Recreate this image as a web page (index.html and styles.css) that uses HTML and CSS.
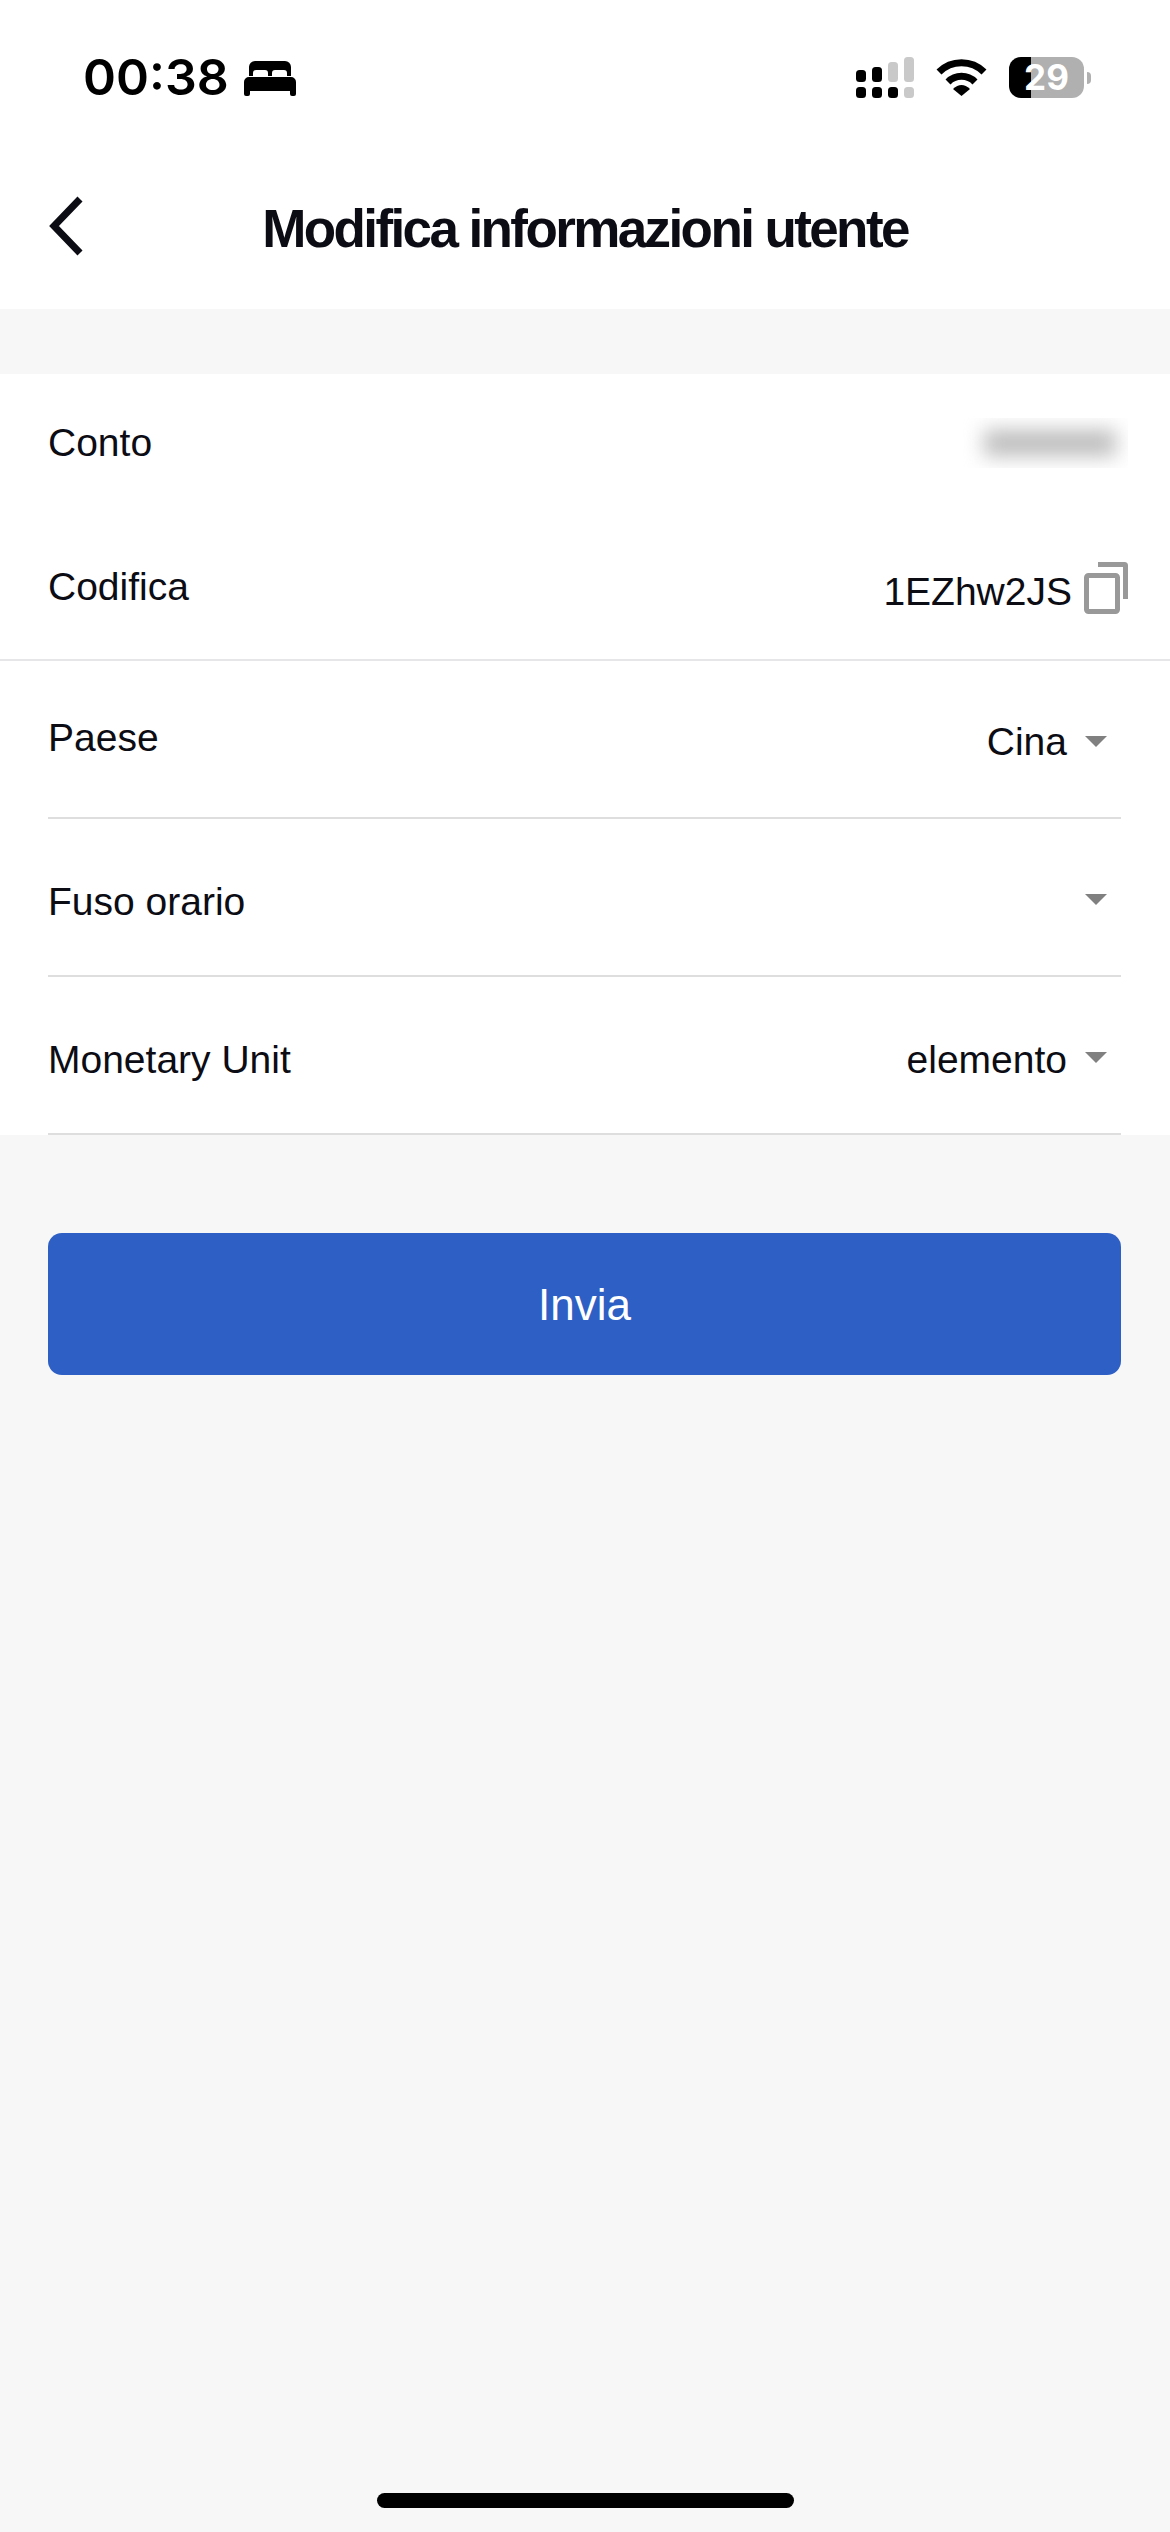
FILE: index.html
```html
<!DOCTYPE html>
<html lang="en">
<head>
    <meta charset="UTF-8">
    <meta name="viewport" content="width=device-width, initial-scale=1.0">
    <title>Modifica informazioni utente</title>
    <link rel="stylesheet" href="styles.css">
</head>
<body>
    <div class="phone">
        <div class="status-bar">
            <div class="status-left">
                <span class="clock">00:38</span>
                <svg class="bed-icon" viewBox="0 0 52 35">
                    <path d="M5 15V6a6 6 0 0 1 6-6h30a6 6 0 0 1 6 6v9h-4v-3c0-2-1-3-3-3h-9c-2 0-3 1-3 3v3h-4v-3c0-2-1-3-3-3h-9c-2 0-3 1-3 3v3z"/>
                    <path d="M5 16h42a5 5 0 0 1 5 5v12a2 2 0 0 1-2 2h-2a2 2 0 0 1-2-2v-3H6v3a2 2 0 0 1-2 2H2a2 2 0 0 1-2-2V21a5 5 0 0 1 5-5z"/>
                </svg>
            </div>
            <div class="status-right">
                <svg class="signal-icon" viewBox="0 0 58 41">
                    <rect x="0" y="13" width="10" height="12" rx="3.5"/>
                    <rect x="16" y="10" width="10" height="15" rx="3.5"/>
                    <rect x="32" y="5" width="10" height="20" rx="3.5" class="off"/>
                    <rect x="48" y="0" width="10" height="25" rx="3.5" class="off"/>
                    <rect x="0" y="30" width="10" height="11" rx="3.5"/>
                    <rect x="16" y="30" width="10" height="11" rx="3.5"/>
                    <rect x="32" y="30" width="10" height="11" rx="3.5"/>
                    <rect x="48" y="30" width="10" height="11" rx="3.5" class="off"/>
                </svg>
                <svg class="wifi-icon" viewBox="0 0 51 37">
                    <path d="M3 13A32 32 0 0 1 48 13" class="arc"/>
                    <path d="M12 23A19 19 0 0 1 39 23" class="arc"/>
                    <path d="M17 30Q25.500 22 34 30L25.500 37z"/>
                </svg>
                <div class="battery">
                    <div class="battery-body">29</div>
                    <div class="battery-nub"></div>
                </div>
            </div>
        </div>

        <header class="nav-bar">
            <svg class="back-icon" viewBox="0 0 36 60">
                <path d="M32 3L6 30l26 27"/>
            </svg>
            <h1 class="nav-title">Modifica informazioni utente</h1>
        </header>

        <section class="info-list">
            <div class="info-top">
                <div class="row row-account">
                    <span class="row-label">Conto</span>
                    <div class="masked"><div class="masked-ink"></div></div>
                </div>
                <div class="row row-code">
                    <span class="row-label">Codifica</span>
                    <div class="row-value">
                        <span class="code-text">1EZhw2JS</span>
                        <svg class="copy-icon" viewBox="0 0 44 52">
                            <rect x="2.500" y="13.500" width="31" height="36" rx="2"/>
                            <path d="M14 2.500h26.500a1 1 0 0 1 1 1V37"/>
                        </svg>
                    </div>
                </div>
            </div>
            <div class="select-row select-country">
                <span class="row-label">Paese</span>
                <div class="row-value">
                    <span class="select-text">Cina</span>
                    <span class="caret"></span>
                </div>
            </div>
            <div class="select-row">
                <span class="row-label">Fuso orario</span>
                <div class="row-value">
                    <span class="caret"></span>
                </div>
            </div>
            <div class="select-row">
                <span class="row-label">Monetary Unit</span>
                <div class="row-value">
                    <span class="select-text">elemento</span>
                    <span class="caret"></span>
                </div>
            </div>
        </section>

        <div class="actions">
            <button class="submit-btn" type="button">Invia</button>
        </div>

        <div class="home-area">
            <div class="home-bar"></div>
        </div>
    </div>
</body>
</html>
```

FILE: styles.css
```css
* {
    box-sizing: border-box;
}
body {
    margin: 0;
    padding: 0;
    background: #f7f7f8;
    color: #0c0c14;
    font-family: 'Liberation Sans', Arial, sans-serif;
}
.phone {
    width: 1170px;
    height: 2532px;
    display: flex;
    flex-direction: column;
    overflow: hidden;
}

/* status bar */
.status-bar {
    height: 130px;
    padding: 42px 79px 0 83px;
    background: #fff;
    color: #000;
    display: flex;
    justify-content: space-between;
    align-items: flex-start;
}
.status-left {
    display: flex;
    align-items: center;
    gap: 15px;
}
.clock {
    font-family: Inter, sans-serif;
    font-size: 50px;
    font-weight: 600;
    line-height: 70px;
}
.bed-icon {
    width: 52px;
    height: 35px;
    margin-top: 3px;
}
.status-right {
    display: flex;
    align-items: flex-start;
    padding-top: 15px;
}
.signal-icon {
    width: 58px;
    height: 41px;
}
.signal-icon .off {
    fill: #c9c9c9;
}
.wifi-icon {
    width: 51px;
    height: 37px;
    margin: 2px 22px 0 22px;
}
.wifi-icon .arc {
    fill: none;
    stroke: #000;
    stroke-width: 7;
}
.battery {
    display: flex;
    align-items: center;
}
.battery-body {
    width: 75px;
    height: 41px;
    border-radius: 12px;
    background: linear-gradient(90deg, #000 29%, #b0b0b0 29%);
    color: #fff;
    font-family: Inter, sans-serif;
    font-size: 35px;
    font-weight: 700;
    line-height: 41px;
    text-align: center;
}
.battery-nub {
    width: 4px;
    height: 12px;
    margin-left: 3px;
    border-radius: 0 4px 4px 0;
    background: #b0b0b0;
}

/* nav */
.nav-bar {
    height: 179px;
    background: #fff;
    display: flex;
    align-items: center;
    padding: 18px 48px 0;
}
.back-icon {
    width: 36px;
    height: 60px;
    margin-bottom: 5px;
    flex-shrink: 0;
}
.back-icon path {
    fill: none;
    stroke: #0c0c14;
    stroke-width: 7;
}
.nav-title {
    margin: 0 0 0 -36px;
    flex: 1;
    font-size: 53px;
    font-weight: 700;
    letter-spacing: -2.6px;
    text-align: center;
}

/* rows */
.info-list {
    margin-top: 65px;
    background: #fff;
    font-size: 39px;
}
.info-top {
    height: 287px;
    border-bottom: 2px solid #e6e6e8;
}
.row {
    display: flex;
    justify-content: space-between;
    align-items: center;
    padding: 0 42px 0 48px;
}
.row-account {
    height: 138px;
}
.row-code {
    height: 146px;
}
.row-code .row-label {
    margin-top: 0;
    margin-bottom: -3px;
}
.row-value {
    display: flex;
    align-items: center;
}
.masked {
    width: 171px;
    height: 50px;
    padding-left: 14px;
    overflow: hidden;
    display: flex;
    align-items: center;
    justify-content: center;
}
.masked-ink {
    width: 132px;
    height: 26px;
    background: #bcbcbc;
    filter: blur(10px);
}
.code-text {
    margin-top: 14px;
}
.copy-icon {
    width: 44px;
    height: 52px;
    margin: 6px 0 0 12px;
}
.copy-icon rect,
.copy-icon path {
    fill: none;
    stroke: #999;
    stroke-width: 5;
}
.select-row {
    height: 158px;
    margin: 0 49px 0 48px;
    border-bottom: 2px solid #dededf;
    display: flex;
    justify-content: space-between;
    align-items: center;
}
.select-row .row-label,
.select-row .select-text {
    margin-top: 10px;
}
.select-row .row-value {
    padding-right: 14px;
}
.select-text {
    margin-right: 18px;
}
.caret {
    width: 0;
    height: 0;
    margin-top: 4px;
    border-left: 11px solid transparent;
    border-right: 11px solid transparent;
    border-top: 11px solid #808080;
}
.select-country .row-label {
    margin-top: 0;
    margin-bottom: 3px;
}
.select-country .select-text {
    margin-top: 5px;
}

/* button */
.actions {
    padding: 98px 49px 0 48px;
}
.submit-btn {
    display: block;
    width: 100%;
    height: 142px;
    padding: 2px 0 0;
    border: none;
    border-radius: 14px;
    background: #2d5fc4;
    color: #fff;
    font-family: 'Liberation Sans', Arial, sans-serif;
    font-size: 44px;
}

/* home indicator */
.home-area {
    flex: 1;
    display: flex;
    align-items: flex-end;
    justify-content: center;
    padding-bottom: 24px;
}
.home-bar {
    width: 417px;
    height: 15px;
    border-radius: 8px;
    background: #000;
}
```
